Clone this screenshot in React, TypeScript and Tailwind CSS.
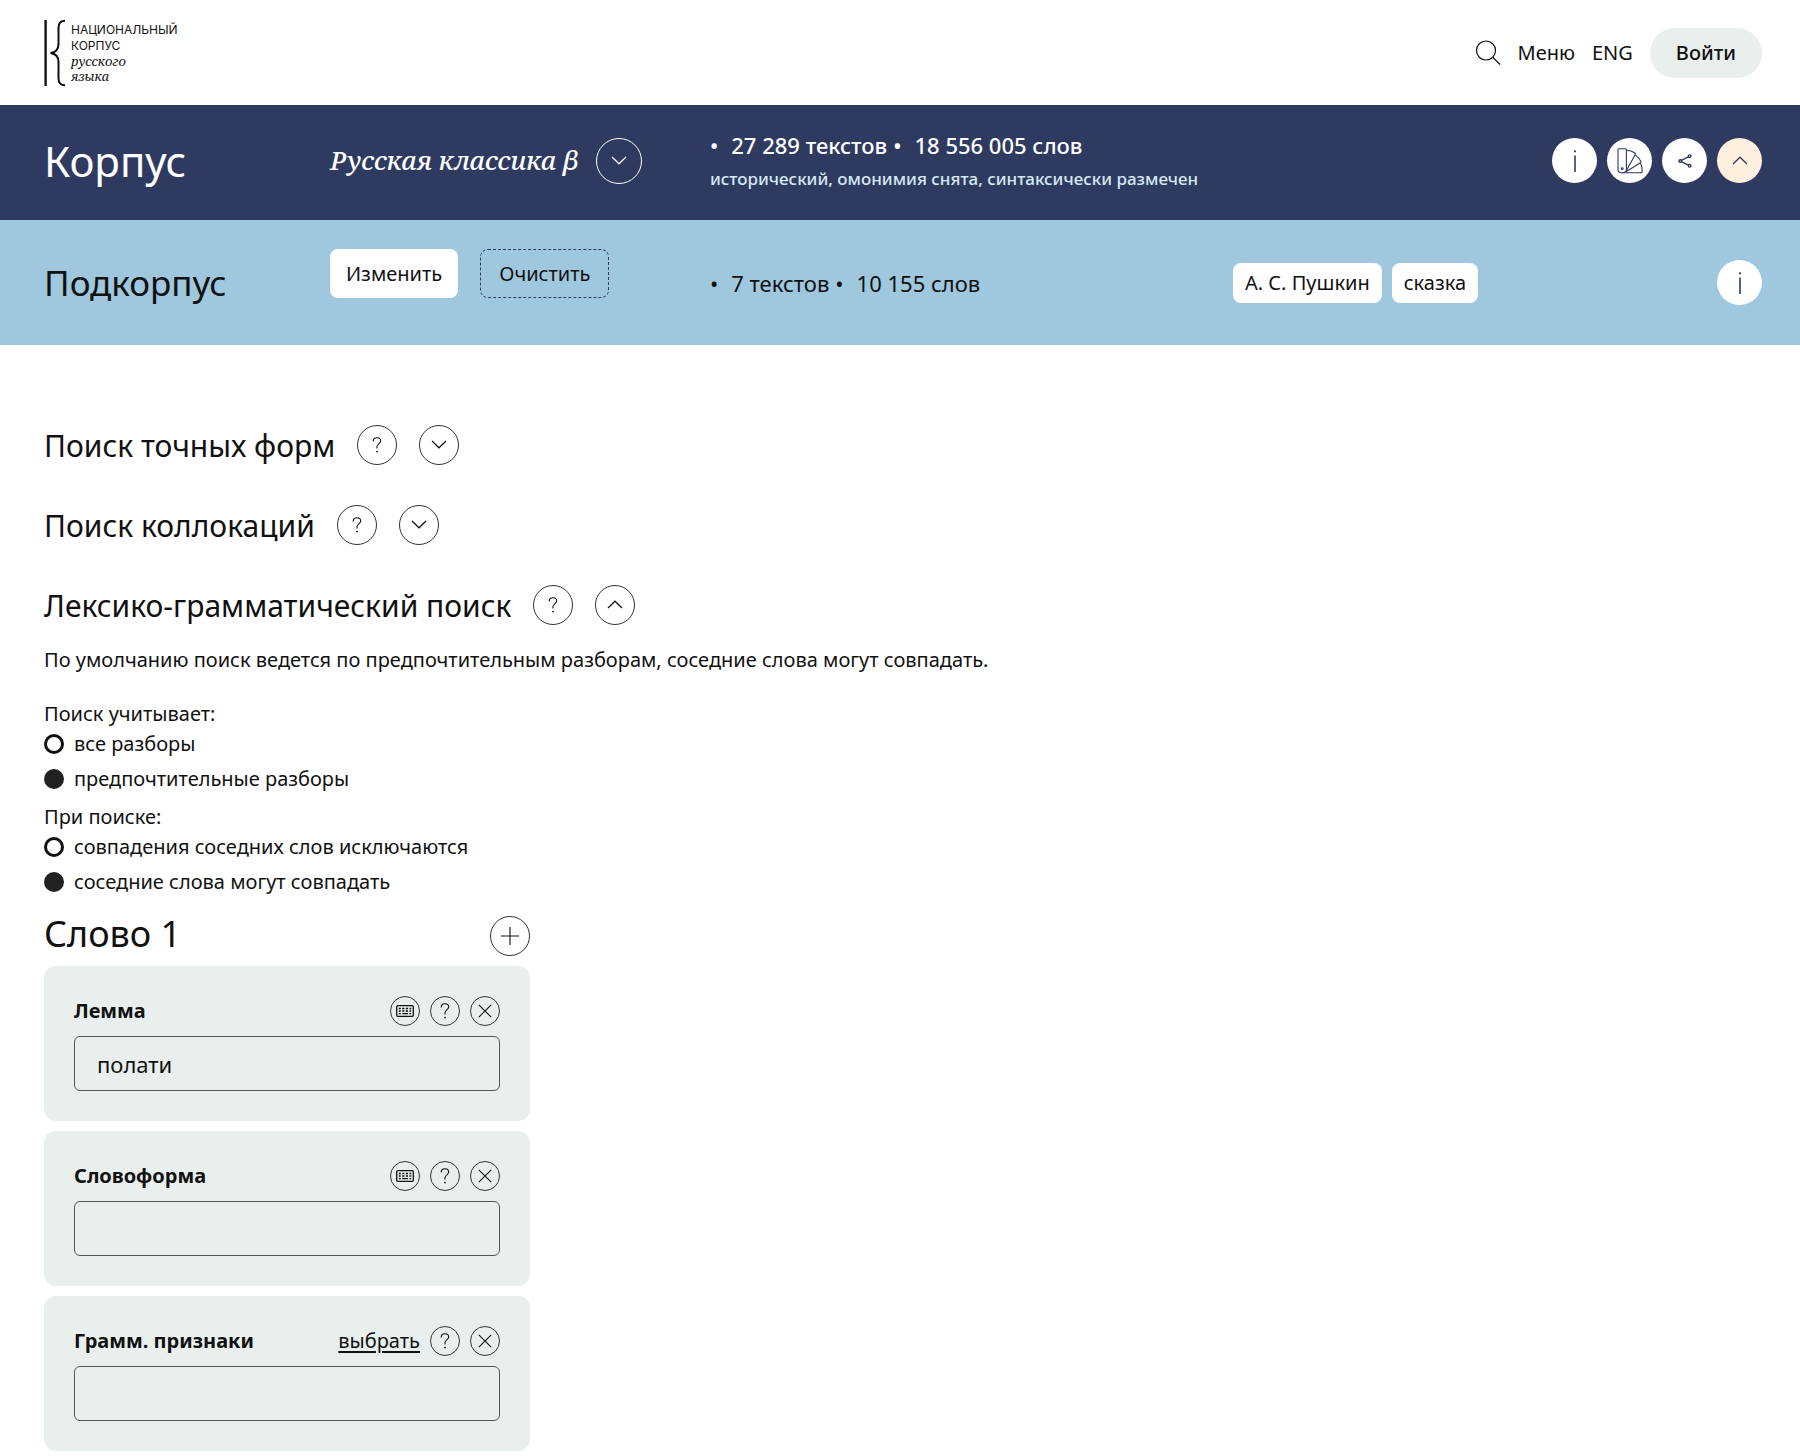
import { useState } from 'react';
import type { ReactNode } from 'react';

const GRID = 'grid grid-cols-[286px_380px_523px_1fr] items-center pl-11 pr-[38px]';

const ChevronIcon = ({ up = false }: { up?: boolean }) => (
  <svg viewBox="0 0 16 10" className="w-4 h-[10px]" fill="none" stroke="currentColor" strokeWidth="1.2">
    {up ? <path d="m1 8 7-6.8L15 8" /> : <path d="m1 1 7 6.800L15 1" />}
  </svg>
);

const QuestionIcon = () => (
  <svg viewBox="0 0 10 16" className="w-[10px] h-4" fill="none" stroke="currentColor" strokeWidth="1.1">
    <path d="M1.2 4.4C1.2 2 2.8.8 5 .8s3.7 1.300 3.700 3.300C8.700 6.700 5 7 5 9.800v1.700" />
    <circle cx="5" cy="14.600" r=".9" fill="currentColor" stroke="none" />
  </svg>
);

const InfoIcon = () => (
  <svg viewBox="0 0 4 22" className="w-1 h-[22px]" fill="currentColor">
    <circle cx="2" cy="1.300" r="1.100" />
    <path d="M1.200 5.500h1.600V22H1.200z" />
  </svg>
);

const CrossIcon = () => (
  <svg viewBox="0 0 14 14" className="w-[14px] h-[14px]" fill="none" stroke="currentColor" strokeWidth="1.1">
    <path d="m.8.8 12.400 12.400M13.200.8.8 13.200" />
  </svg>
);

const KeyboardIcon = () => (
  <svg viewBox="0 0 18 12" className="w-[18px] h-3" fill="none" stroke="currentColor" strokeWidth="1.300">
    <rect x=".7" y=".7" width="16.600" height="10.600" rx="1" />
    <path d="M2.800 3.500h2M6.200 3.500h2.200M9.800 3.500H12M13.400 3.500h1.800M2.800 6h2M6.200 6h2.200M9.800 6H12M13.400 6h1.800M2.800 8.700h2M6.200 8.700H12M13.400 8.700h1.800" />
  </svg>
);

const PaletteIcon = () => (
  <svg viewBox="0 0 26 26" className="w-[26px] h-[26px]" fill="none" stroke="currentColor" strokeWidth="1.100" strokeLinejoin="round">
    <path d="M1.800.8h6.700a.9.900 0 0 1 .9.900v19.800a3.400 3.400 0 0 1-3.400 3.300H4.400A3.400 3.400 0 0 1 1 21.500V1.600a.8.800 0 0 1 .8-.8z" />
    <path d="M9.400 2.200c3 .1 6 1 8.600 2.800.5.400.5.900.3 1.500L9.400 22.500" />
    <path d="M17.700 7.300c.6-.2 1-.1 1.400.3 2 1.600 3.600 3.500 4.700 5.700.3.600.1 1-.4 1.400L9 23.700" />
    <path d="m22.500 15.300 1.300.4c.9 2 1.300 4.300 1.300 6.600v1.700a.8.800 0 0 1-.8.800H5.500" />
    <circle cx="5.200" cy="20.800" r=".9" />
  </svg>
);

const ShareIcon = () => (
  <svg viewBox="0 0 14 14" className="w-[14px] h-[14px]" fill="none" stroke="currentColor" strokeWidth="1.400">
    <path d="M10.300 2.900 3.400 6.300M3.400 7.700l6.900 3.400" />
    <circle cx="2.300" cy="7" r="1.300" />
    <circle cx="11.600" cy="2.200" r="1.300" />
    <circle cx="11.600" cy="11.800" r="1.300" />
  </svg>
);

const SearchIcon = () => (
  <svg viewBox="0 0 26 26" className="w-[26px] h-[26px]" fill="none" stroke="currentColor" strokeWidth="1.200">
    <circle cx="11" cy="10.500" r="9.500" />
    <path d="m17.700 17.300 7.300 7.200" />
  </svg>
);

const Logo = () => (
  <a href="#" className="flex gap-1" aria-label="Национальный корпус русского языка">
    <svg viewBox="0 0 23 68" className="w-[23px] h-[68px]" fill="none" stroke="#111">
      <path strokeWidth="2.400" d="M1.600 1v66" />
      <path strokeWidth="2" d="M21 1.800c-4.500 0-6.500 2.200-6.500 7v16.400c0 5-2.500 8-8 8.800 5.500.8 8 3.800 8 8.800v16.400c0 4.800 2 7 6.500 7" />
    </svg>
    <span className="flex flex-col pt-[3px] text-[#111]">
      <span className="font-['Inter','Liberation_Sans',sans-serif] text-xs leading-4">НАЦИОНАЛЬНЫЙ</span>
      <span className="font-['Inter','Liberation_Sans',sans-serif] text-xs leading-4">КОРПУС</span>
      <span className="font-['Noto_Serif','DejaVu_Serif',serif] italic text-[13px] leading-[15px]">русского</span>
      <span className="font-['Noto_Serif','DejaVu_Serif',serif] italic text-[13px] leading-[15px]">языка</span>
    </span>
  </a>
);

interface RoundButtonProps {
  label: string;
  className: string;
  children: ReactNode;
}

const RoundButton = ({ label, className, children }: RoundButtonProps) => (
  <button
    type="button"
    aria-label={label}
    className={`flex shrink-0 items-center justify-center rounded-full cursor-pointer ${className}`}
  >
    {children}
  </button>
);

const SectionHeading = ({ title, open = false }: { title: string; open?: boolean }) => (
  <div className="flex h-10 items-center gap-[22px]">
    <h2 className="pt-0.5 text-[30px] leading-10">{title}</h2>
    <RoundButton label="Справка" className="size-10 border border-[#333]">
      <QuestionIcon />
    </RoundButton>
    <RoundButton label={open ? 'Свернуть' : 'Развернуть'} className="size-10 border border-[#333]">
      <ChevronIcon up={open} />
    </RoundButton>
  </div>
);

interface RadioGroupProps {
  name: string;
  legend: string;
  options: string[];
}

const RadioGroup = ({ name, legend, options }: RadioGroupProps) => {
  const [selected, setSelected] = useState(options[1]);

  return (
    <fieldset>
      <legend className="leading-[30px]">{legend}</legend>
      <div className="flex flex-col gap-[5px]">
        {options.map((option) => (
          <label key={option} className="flex h-[30px] items-center gap-[10px]">
            <input
              type="radio"
              name={name}
              checked={selected === option}
              onChange={() => setSelected(option)}
              className="size-5 appearance-none rounded-full border-3 border-[#111] checked:bg-[#222] checked:border-[#222]"
            />
            {option}
          </label>
        ))}
      </div>
    </fieldset>
  );
};

interface FieldCardProps {
  id: string;
  title: string;
  value?: string;
  picker?: boolean;
}

const FieldCard = ({ id, title, value = '', picker = false }: FieldCardProps) => (
  <div className="rounded-xl bg-[#e9efed] px-[30px] pt-[29px] pb-[30px]">
    <div className="flex h-[31px] items-center gap-[10px]">
      <label htmlFor={id} className="mr-auto font-bold">
        {title}
      </label>
      {picker ? (
        <a href="#" className="underline underline-offset-3">
          выбрать
        </a>
      ) : (
        <RoundButton label="Клавиатура" className="size-[30px] border border-[#333]">
          <KeyboardIcon />
        </RoundButton>
      )}
      <RoundButton label="Справка" className="size-[30px] border border-[#333]">
        <QuestionIcon />
      </RoundButton>
      <RoundButton label="Удалить" className="size-[30px] border border-[#333]">
        <CrossIcon />
      </RoundButton>
    </div>
    <input
      id={id}
      type="text"
      defaultValue={value}
      className="mt-[10px] block h-[55px] w-full rounded-md border border-[#555] bg-transparent px-[22px] text-[22px] outline-none"
    />
  </div>
);

const App = () => {
  return (
    <div className="min-h-screen bg-white font-['Noto_Sans',sans-serif] text-xl text-[#111]">
      <header className="flex h-[105px] items-center justify-between pl-11 pr-[38px]">
        <Logo />
        <nav className="flex items-center gap-[17px]">
          <button type="button" aria-label="Поиск">
            <SearchIcon />
          </button>
          <a href="#">Меню</a>
          <a href="#">ENG</a>
          <button type="button" className="h-[50px] rounded-full bg-[#e9efed] px-[26px] font-medium">
            Войти
          </button>
        </nav>
      </header>

      <section className={`${GRID} h-[115px] bg-[#2e3a5f] pb-1 text-white`}>
        <h1 className="text-[42px] leading-none">Корпус</h1>
        <div className="flex items-center gap-[17px]">
          <span className="font-['Noto_Serif','DejaVu_Serif',serif] italic font-medium text-[26px] whitespace-nowrap">
            Русская классика β
          </span>
          <RoundButton label="Выбрать корпус" className="size-[46px] border border-white">
            <ChevronIcon />
          </RoundButton>
        </div>
        <div className="whitespace-nowrap">
          <ul className="flex gap-[6px] text-[22px] leading-9 font-medium">
            <li className="flex gap-[13px]"><span>•</span>27 289 текстов</li>
            <li className="flex gap-[13px]"><span>•</span>18 556 005 слов</li>
          </ul>
          <p className="text-[17px] leading-8 font-medium text-[#d5e8f5]">
            исторический, омонимия снята, синтаксически размечен
          </p>
        </div>
        <div className="flex justify-end gap-[10px] text-[#2e3a5f]">
          <RoundButton label="О корпусе" className="size-[45px] bg-white">
            <InfoIcon />
          </RoundButton>
          <RoundButton label="Палитра" className="size-[45px] bg-white">
            <PaletteIcon />
          </RoundButton>
          <RoundButton label="Поделиться" className="size-[45px] bg-white">
            <ShareIcon />
          </RoundButton>
          <RoundButton label="Свернуть" className="size-[45px] bg-[#ffefdf]">
            <ChevronIcon up />
          </RoundButton>
        </div>
      </section>

      <section className={`${GRID} h-[125px] bg-[#9fc7dd]`}>
        <h2 className="text-[35px]">Подкорпус</h2>
        <div className="flex gap-[22px] self-start pt-[29px]">
          <button type="button" className="h-[49px] rounded-lg bg-white px-4">
            Изменить
          </button>
          <button type="button" className="h-[49px] rounded-lg border border-dashed border-[#2e3a5f] px-[18px]">
            Очистить
          </button>
        </div>
        <ul className="flex gap-[6px] text-[22px] leading-8 whitespace-nowrap">
          <li className="flex gap-[13px]"><span>•</span>7 текстов</li>
          <li className="flex gap-[13px]"><span>•</span>10 155 слов</li>
        </ul>
        <div className="flex items-center gap-[10px] whitespace-nowrap">
          <span className="h-10 rounded-lg bg-white px-3 leading-10">А. С. Пушкин</span>
          <span className="h-10 rounded-lg bg-white px-3 leading-10">сказка</span>
          <RoundButton label="О подкорпусе" className="ml-auto size-[45px] bg-white text-[#2e3a5f]">
            <InfoIcon />
          </RoundButton>
        </div>
      </section>

      <main className="px-11 pt-20 pb-[5px]">
        <div className="flex flex-col gap-10">
          <SectionHeading title="Поиск точных форм" />
          <SectionHeading title="Поиск коллокаций" />
          <SectionHeading title="Лексико-грамматический поиск" open />
        </div>

        <p className="mt-5 leading-[30px]">
          По умолчанию поиск ведется по предпочтительным разборам, соседние слова могут совпадать.
        </p>

        <form className="mt-6 flex flex-col gap-2">
          <RadioGroup name="parses" legend="Поиск учитывает:" options={['все разборы', 'предпочтительные разборы']} />
          <RadioGroup
            name="neighbors"
            legend="При поиске:"
            options={['совпадения соседних слов исключаются', 'соседние слова могут совпадать']}
          />

          <div className="flex w-full max-w-[486px] flex-col gap-[10px] pt-[11px]">
            <div className="flex h-10 justify-between">
              <h2 className="text-4xl leading-9">Слово 1</h2>
              <RoundButton label="Добавить слово" className="size-10 border border-[#333]">
                <svg viewBox="0 0 18 18" className="size-[18px]" fill="none" stroke="currentColor" strokeWidth="1.1">
                  <path d="M9 0v18M0 9h18" />
                </svg>
              </RoundButton>
            </div>
            <FieldCard id="lemma" title="Лемма" value="полати" />
            <FieldCard id="wordform" title="Словоформа" />
            <FieldCard id="grammar" title="Грамм. признаки" picker />
          </div>
        </form>
      </main>
    </div>
  );
};

export default App;
